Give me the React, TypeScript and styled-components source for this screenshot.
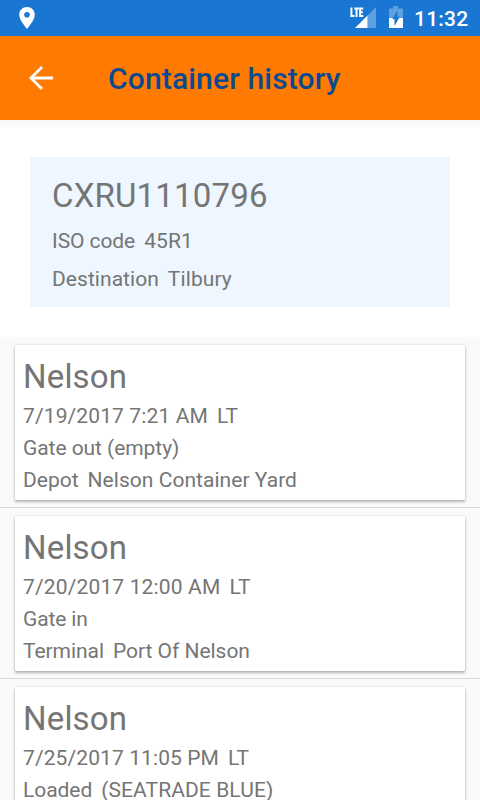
import React from "react";
import styled, { createGlobalStyle } from "styled-components";

const GlobalStyle = createGlobalStyle`
  * { box-sizing: border-box; }
  body { margin: 0; background: #fafafa; font-family: Roboto, sans-serif; color: #757575; overflow: hidden; }
`;

const Screen = styled.main`
  width: 480px;
  height: 800px;
  overflow: hidden;
  display: flex;
  flex-direction: column;
`;

const StatusBar = styled.header`
  height: 36px;
  flex: none;
  display: flex;
  align-items: center;
  background: #1976d2;
  color: #fff;
  padding: 0 11px 0 18px;
`;

const StatusIcon = styled.svg<{ $gap?: number }>`
  display: block;
  flex: none;
  margin-left: ${(p) => p.$gap ?? 0}px;
`;

const Spacer = styled.div`
  flex: 1;
`;

const Clock = styled.time`
  width: 55px;
  margin-left: 10px;
  font-size: 21px;
  font-weight: 500;
  letter-spacing: 0.2px;
  line-height: 36px;
  padding-top: 1px;
  white-space: nowrap;
`;

const AppBar = styled.nav`
  height: 84px;
  flex: none;
  display: flex;
  align-items: center;
  background: #ff7a00;
  padding-left: 28px;
`;

const BackButton = styled.button`
  width: 80px;
  padding: 0 0 1px;
  border: 0;
  background: none;
  display: flex;
`;

const Title = styled.h1`
  margin: 0;
  color: #0b4a8f;
  font-size: 30px;
  font-weight: 500;
  letter-spacing: 0.16px;
  line-height: 36px;
  padding-top: 1px;
  white-space: nowrap;
`;

const Summary = styled.section`
  flex: none;
  height: 210px;
  margin-top: 7px;
  padding: 30px;
  background: #fff;
`;

const SummaryBox = styled.div`
  height: 150px;
  padding: 19px 22px 0;
  background: #eef6ff;
`;

const Heading = styled.h2<{ $height?: number }>`
  margin: 0;
  height: ${(p) => p.$height ?? 43}px;
  font-size: 33px;
  font-weight: 400;
  letter-spacing: 0.17px;
  line-height: 40px;
  white-space: nowrap;
`;

const Line = styled.p<{ $height?: number }>`
  margin: 0;
  display: flex;
  gap: 9px;
  font-size: 21px;
  line-height: ${(p) => p.$height ?? 32}px;
  white-space: pre;
`;

const Run = styled.span<{ $track?: number }>`
  letter-spacing: ${(p) => p.$track ?? 0}px;
`;

const List = styled.ul`
  margin: 0;
  padding: 0;
  list-style: none;
  flex: none;
`;

const Item = styled.li`
  height: 171px;
  padding: 8px 15px 7px;
  border-bottom: 1px solid #dadada;
`;

const Card = styled.article`
  height: 155px;
  padding: 12px 8px 0;
  background: #fff;
  border-radius: 1px;
  box-shadow: 0 0 2px rgba(0, 0, 0, 0.2), 0 2px 3px rgba(0, 0, 0, 0.26);
`;

type Row = { label: string; value?: string; track?: number; valueTrack?: number };
type Event = { place: string; rows: Row[] };

const events: Event[] = [
  {
    place: "Nelson",
    rows: [
      { label: "7/19/2017 7:21 AM", value: "LT", track: 0.12 },
      { label: "Gate out (empty)", track: -0.06 },
      { label: "Depot", value: "Nelson Container Yard", valueTrack: 0.04 },
    ],
  },
  {
    place: "Nelson",
    rows: [
      { label: "7/20/2017 12:00 AM", value: "LT", track: 0.15 },
      { label: "Gate in", track: -0.12 },
      { label: "Terminal", value: "Port Of Nelson", track: -0.06, valueTrack: -0.03 },
    ],
  },
  {
    place: "Nelson",
    rows: [
      { label: "7/25/2017 11:05 PM", value: "LT", track: 0.1 },
      { label: "Loaded", value: "(SEATRADE BLUE)", track: -0.05, valueTrack: 0.09 },
    ],
  },
];

function TextLine({ label, value, track, valueTrack, height }: Row & { height?: number }) {
  return (
    <Line $height={height}>
      <Run $track={track}>{label}</Run>
      {value && <Run $track={valueTrack}>{value}</Run>}
    </Line>
  );
}

export default function App() {
  return (
    <Screen>
      <GlobalStyle />
      <StatusBar>
        <StatusIcon width="18" height="24" viewBox="0 0 18 24">
          <path fill="#fff" fillRule="evenodd" d="M9 1C4.6 1 1.2 4.4 1.2 8.7 1.2 14.2 9 22.8 9 22.8s7.8-8.6 7.8-14.1C16.8 4.4 13.4 1 9 1Zm0 5a2.8 2.8 0 1 1 0 5.6A2.8 2.8 0 0 1 9 6Z" />
        </StatusIcon>
        <Spacer />
        <StatusIcon width="27" height="24" viewBox="0 0 27 24">
          <path fill="#fff" fillOpacity="0.3" d="M26 1v21H17.5V9.5Z" />
          <path fill="#fff" d="M17.5 9.5v12.5H5Z" />
          <path stroke="#fff" strokeWidth="2" fill="none" d="M1.4 1.5v8.6h3M4.2 2.5h4.6M6.5 2.5v8.6M13.2 2.5H10.1v7.6h3.1M10 6.3h2.8" />
        </StatusIcon>
        <StatusIcon $gap={11} width="16" height="24" viewBox="0 0 16 24">
          <path fill="#fff" fillOpacity="0.3" d="M1 2.5h4V0h5v2.5h5V12H1Z" />
          <path fill="#fff" d="M1 12h14v10H1Z" />
          <path fill="#1976d2" d="M9.5 4.5v6.2h2.3L6.5 20v-6.8H4.2Z" />
        </StatusIcon>
        <Clock>11:32</Clock>
      </StatusBar>
      <AppBar>
        <BackButton aria-label="Back">
          <svg width="26" height="26" viewBox="0 0 26 26">
            <path d="M14 2 3 13l11 11M3 13h22" fill="none" stroke="#fff" strokeWidth="2.8" />
          </svg>
        </BackButton>
        <Title>Container history</Title>
      </AppBar>
      <Summary>
        <SummaryBox>
          <Heading $height={46}>CXRU1110796</Heading>
          <TextLine label="ISO code" value="45R1" track={-0.08} valueTrack={0.1} height={38} />
          <TextLine label="Destination" value="Tilbury" track={0.05} valueTrack={0.1} height={38} />
        </SummaryBox>
      </Summary>
      <List>
        {events.map((event, i) => (
          <Item key={i}>
            <Card>
              <Heading>{event.place}</Heading>
              {event.rows.map((row) => (
                <TextLine key={row.label} {...row} />
              ))}
            </Card>
          </Item>
        ))}
      </List>
    </Screen>
  );
}
